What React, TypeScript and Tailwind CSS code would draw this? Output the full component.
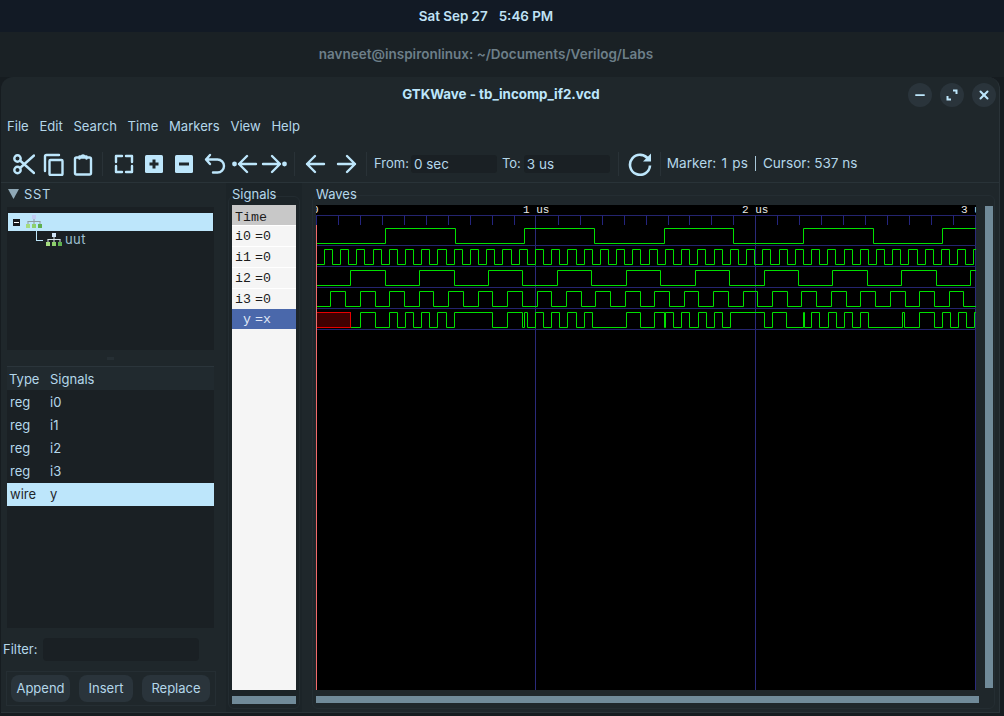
import { Minus, X } from "lucide-react";

const ACCENT = "#bde6fb";

// builds a square wave path from toggle positions, starting low
function wavePath(edges: number[], hi: number, lo: number, startX = 0, end = 660) {
  let d = `M${startX} ${lo}`;
  let high = false;
  for (const x of edges) {
    d += `H${x}V${high ? lo : hi}`;
    high = !high;
  }
  return d + `H${end}`;
}

function periodic(half: number, end = 660) {
  const out: number[] = [];
  for (let k = 1; half * k < end; k++) out.push(Math.floor(half * k + 0.2) + 0.5);
  return out;
}

const yEdges = [
  360, 375, 389, 397, 405, 413, 421, 429, 437, 446, 454, 492, 507, 522, 524, 527, 535, 543, 551, 559, 567, 576, 584,
  592, 626, 640, 654, 664, 665, 673, 681, 689, 698, 706, 714, 722, 730, 764, 772, 786, 803, 804, 811, 819, 828, 836,
  844, 852, 860, 868, 902, 904, 919, 934, 942, 950, 958, 966, 974,
].map((x) => x - 316 + 0.5);

const ticks: number[] = [];
for (let i = 1; i < 30; i++) if (i % 10 !== 0) ticks.push(Math.round(i * 21.97) + 0.5);

function WaveCanvas() {
  return (
    <svg width="660" height="485" viewBox="0 0 660 485" className="block bg-black">
      <g fontFamily="'Liberation Mono', monospace" fontSize="11" fill="#e8e8e8">
        <text x="-4" y="8">0</text>
        <text x="207" y="8">1 us</text>
        <text x="426" y="8">2 us</text>
        <text x="645" y="8">3 us</text>
      </g>
      <path d="M0 10.5H660" stroke="#24246e" />
      {ticks.map((x) => (
        <path key={x} d={`M${x} 10V20`} stroke="#24247e" />
      ))}
      <path d="M219.5 10V485M439.5 10V485M659.5 10V485" stroke="#2a2a7a" />
      <path d="M0 40.5H660M0 61.5H660M0 82.5H660M0 103.5H660M0 124.5H660" stroke="#24246e" />
      <g fill="none" stroke="#00e000">
        <path d={wavePath(periodic(69.6), 23.5, 38.5)} />
        <path d={wavePath(periodic(8.12), 44.5, 59.5)} />
        <path d={wavePath(periodic(34.45), 65.5, 80.5)} />
        <path d={wavePath(periodic(14.72), 86.5, 101.5)} />
        <path d={wavePath(yEdges, 107.5, 122.5, 34.5)} />
      </g>
      <rect x="0.5" y="107.5" width="34" height="15" fill="#400000" stroke="#e80000" />
      <path d="M0.5 10V20" stroke="#24247e" />
      <path d="M0.5 20V485" stroke="#f26a6a" />
    </svg>
  );
}

function Sep() {
  return <div className="w-px h-[24px] bg-[#293237]" />;
}

const iconProps = {
  fill: "none",
  stroke: ACCENT,
  strokeWidth: 2.4,
  strokeLinecap: "round" as const,
  strokeLinejoin: "round" as const,
};

function ToolIcon({ w = 24, children }: { w?: number; children: React.ReactNode }) {
  return (
    <svg width={w} height="24" viewBox={`0 0 ${w} 24`} className="shrink-0" {...iconProps}>
      {children}
    </svg>
  );
}

function Toolbar() {
  return (
    <div className="h-[38px] flex items-center pl-[10px] border-b border-[#293338]">
      <div className="flex items-center gap-[6px]">
        <ToolIcon>
          <circle cx="6.5" cy="6.5" r="3.2" />
          <circle cx="6.5" cy="18" r="3.2" />
          <path d="M9 8.5L23 21M9 16L23 3.5" />
        </ToolIcon>
        <ToolIcon>
          <path d="M4 19V4.5Q4 3 5.5 3H18" />
          <rect x="8.5" y="8" width="13" height="15" rx="1" />
        </ToolIcon>
        <ToolIcon>
          <rect x="4" y="5.5" width="16" height="17" rx="1.5" />
          <path d="M8.5 6.5V4.5H10.5A1.6 1.6 0 0 1 13.5 4.5H15.5V6.5" />
        </ToolIcon>
      </div>
      <div className="ml-[7px] mr-[9px]">
        <Sep />
      </div>
      <div className="flex items-center gap-[6px]">
        <ToolIcon>
          <path d="M10 4H4V10M14 4H20V10M10 20H4V14M14 20H20V14" />
        </ToolIcon>
        <svg width="24" height="24" viewBox="0 0 24 24" className="shrink-0">
          <rect x="3" y="3" width="18" height="18" rx="1.5" fill={ACCENT} />
          <path d="M12 7.5V16.5M7.5 12H16.5" stroke="#1f272b" strokeWidth="3" />
        </svg>
        <svg width="24" height="24" viewBox="0 0 24 24" className="shrink-0">
          <rect x="3" y="3" width="18" height="18" rx="1.5" fill={ACCENT} />
          <path d="M7 12H17" stroke="#1f272b" strokeWidth="3" />
        </svg>
        <ToolIcon>
          <path d="M8 3L4 7.5L8 12M4 7.5H15.5A6.5 6.5 0 0 1 15.5 20.5H11" />
        </ToolIcon>
      </div>
      <div className="flex items-center ml-[5px] gap-[3px]">
        <ToolIcon w={27}>
          <circle cx="3.5" cy="12" r="2.4" fill={ACCENT} stroke="none" />
          <path d="M16 4L8 12L16 20M8 12H25" />
        </ToolIcon>
        <ToolIcon w={27}>
          <circle cx="23.5" cy="12" r="2.4" fill={ACCENT} stroke="none" />
          <path d="M11 4L19 12L11 20M2 12H19" />
        </ToolIcon>
      </div>
      <div className="ml-[6px] mr-[9px]">
        <Sep />
      </div>
      <div className="flex items-center gap-[7px]">
        <ToolIcon>
          <path d="M11 4L3 12L11 20M3 12H20" />
        </ToolIcon>
        <ToolIcon>
          <path d="M12 4L20 12L12 20M3 12H20" />
        </ToolIcon>
      </div>
      <div className="ml-[7px] mr-[7px]">
        <Sep />
      </div>
      <span>From:</span>
      <div className="ml-[2px] w-[86px] h-[18px] rounded-[3px] bg-[#1a2024] pl-[3px] leading-[19px] text-[13.5px]">0 sec</div>
      <span className="ml-[5px]">To:</span>
      <div className="ml-[3px] w-[86px] h-[18px] rounded-[3px] bg-[#1a2024] pl-[3px] leading-[19px] text-[13.5px]">3 us</div>
      <div className="ml-[8px] mr-[9px]">
        <Sep />
      </div>
      <svg width="24" height="24" viewBox="0 0 24 24" className="shrink-0" fill="none">
        <path d="M20.5 7.5A10 10 0 1 0 22 13.5" stroke={ACCENT} strokeWidth="2.6" />
        <path d="M23 1.5V9.5H15Z" fill={ACCENT} />
      </svg>
      <div className="ml-[8px] mr-[6px]">
        <Sep />
      </div>
      <span className="text-[13.6px] [word-spacing:1.5px]">Marker: 1 ps</span>
      <span className="mx-[7px] w-px h-[15px] bg-[#a8c8da]" />
      <span className="text-[13.6px]">Cursor: 537 ns</span>
    </div>
  );
}

function Hierarchy({ size = "top" }: { size?: "top" | "sub" }) {
  const top = size === "top" ? "#c3cdf5" : "#cfe3f5";
  return (
    <svg width="17" height="14" viewBox="0 0 17 14" className="shrink-0">
      <rect x="6" y="0" width="4" height="4" fill={top} />
      <path d="M8 4V6.5M1.5 6.5H14.5M2 6.5V9M8 6.5V9M14 6.5V9" stroke={size === "top" ? "#8e9ba0" : "#d8e4ea"} fill="none" />
      <rect x="0" y="9" width="4" height="4" fill="#a5dc80" />
      <rect x="6" y="9" width="4" height="4" fill="#8ed06d" />
      <rect x="12" y="9" width="4" height="4" fill="#5fb04f" />
    </svg>
  );
}

const sigs = [
  ["reg", "i0"],
  ["reg", "i1"],
  ["reg", "i2"],
  ["reg", "i3"],
];

function LeftPanel() {
  return (
    <div className="w-[225px] shrink-0 flex flex-col pl-[6px] pr-[12px] relative">
      <div className="h-[24px] flex items-center pl-px gap-[5px]">
        <svg width="11" height="10" viewBox="0 0 11 10" className="-mt-[3px]">
          <path d="M0 0H11L5.5 10Z" fill="#8fa8b6" />
        </svg>
        <span className="tracking-[0.6px]">SST</span>
      </div>
      <div className="h-[143px] bg-[#1a2024] pt-[6px] px-px">
        <div className="h-[18px] bg-[#bde6fb] flex items-center pl-[5px] gap-[6px]">
          <span className="w-[7px] h-[7px] bg-[#16191c] flex items-center justify-center">
            <span className="w-[5px] h-px bg-white" />
          </span>
          <Hierarchy />
        </div>
        <div className="relative h-[20px] flex items-center pl-[38px] pb-[2px] gap-[2px]">
          <span className="absolute left-[28px] top-0 w-[7px] h-[10px] border-l border-b border-[#bde6fb]" />
          <Hierarchy size="sub" />
          <span className="text-[#9fc0d2] tracking-[0.4px]">uut</span>
        </div>
      </div>
      <div className="h-[16px] flex items-center justify-center">
        <span className="w-[7px] h-[3px] bg-[#262f34]" />
      </div>
      <div className="h-[24px] flex items-center pl-[2px] pt-[2px] bg-[#212a2f] border-t border-[#2b353b]">
        <span className="w-[41px]">Type</span>
        <span>Signals</span>
      </div>
      <div className="h-[238px] pt-px bg-[#1a2024]">
        {sigs.map(([t, n]) => (
          <div key={n} className="h-[23px] flex items-center pl-[3px]">
            <span className="w-[40px]">{t}</span>
            <span>{n}</span>
          </div>
        ))}
        <div className="h-[23px] flex items-center pl-[3px] bg-[#bde6fb] text-[#1f272b]">
          <span className="w-[40px]">wire</span>
          <span>y</span>
        </div>
      </div>
      <div className="h-[43px] -ml-[4px] flex items-center gap-[5px]">
        <span>Filter:</span>
        <div className="w-[156px] h-[23px] rounded-[4px] bg-[#1a2024]" />
      </div>
      <div className="-ml-px w-[210px] h-[35px] flex items-center gap-[9px] pl-[4px] border border-[#252e33]">
        <button className="w-[59px] h-[27px] rounded-[8px] bg-[#2a343b]">Append</button>
        <button className="w-[54px] h-[27px] rounded-[8px] bg-[#2a343b]">Insert</button>
        <button className="w-[68px] h-[27px] rounded-[8px] bg-[#2a343b]">Replace</button>
      </div>
    </div>
  );
}

const names = [
  ["i0", "=0"],
  ["i1", "=0"],
  ["i2", "=0"],
  ["i3", "=0"],
];

function SignalsPanel() {
  return (
    <div className="relative w-[76px] shrink-0 flex flex-col pl-[6px] bg-[#1c2428]">
      <div className="absolute left-[2px] right-[2px] top-[13px] bottom-[3px] rounded-[6px] border border-[#232c31]" />
      <div className="relative h-[22px] leading-[22px]">Signals</div>
      <div className="relative w-[64px] h-[485px] bg-[#f5f5f5] font-['Liberation_Mono',monospace] text-[13.3px] text-[#1c1c1c]">
        <div className="h-[20px] leading-[25px] bg-[#c8c8c8] pl-[3px] overflow-hidden">Time</div>
        {names.map(([a, b]) => (
          <div key={a} className="h-[21px] leading-[21px] pl-[3px] border-t border-white flex gap-[4px]">
            <span>{a}</span>
            <span>{b}</span>
          </div>
        ))}
        <div className="h-[20px] leading-[22px] pl-[11px] bg-[#4a68ab] text-[#dfe6f5] flex gap-[4px]">
          <span>y</span>
          <span>=x</span>
        </div>
      </div>
      <div className="relative w-[64px] h-[8px] mt-[6px] bg-[#708a99]" />
    </div>
  );
}

function WavesPanel() {
  return (
    <div className="relative flex-1 flex flex-col pl-[14px]">
      <div className="absolute left-[10px] right-[4px] top-[12px] bottom-[3px] rounded-[6px] border border-[#242d32]" />
      <div className="relative h-[22px] leading-[22px]">Waves</div>
      <div className="relative flex gap-[9px]">
        <WaveCanvas />
        <div className="w-[8px] h-[482px] mt-px bg-[#708a99]" />
      </div>
      <div className="relative w-[663px] h-[7px] mt-[6px] bg-[#708a99]" />
    </div>
  );
}

export default function App() {
  return (
    <div className="w-[1004px] h-[716px] overflow-hidden flex flex-col bg-[#161c20] font-['Inter',sans-serif] text-[13px] text-[#b4d7ea]">
      <div className="h-[32px] shrink-0 bg-[#121a25] flex items-center justify-center pr-[32px] font-semibold text-[13.4px] text-[#c0e2f5]">
        <span>Sat Sep 27</span>
        <span className="ml-[11px]">5:46 PM</span>
      </div>
      <div className="h-[45px] shrink-0 bg-[#1a2125] flex items-center justify-center pr-[32px] font-semibold text-[13.5px] text-[#6d7f89]">
        navneet@inspironlinux: ~/Documents/Verilog/Labs
      </div>
      <div className="w-[999px] h-[636px] ml-px flex flex-col rounded-t-[12px] bg-[#1f272b] border-b border-r border-[#2a3338]">
        <div className="h-[34px] shrink-0 relative flex items-center justify-center pt-[2px] pl-[2px] font-bold text-[13.33px] text-[#bde6fb]">
          GTKWave - tb_incomp_if2.vcd
          <div className="absolute right-[3px] top-[6px] flex gap-[8px]">
            <span className="w-[24px] h-[24px] rounded-full bg-[#2a343b] flex items-center justify-center">
              <Minus size={14} strokeWidth={3} color={ACCENT} />
            </span>
            <span className="w-[24px] h-[24px] rounded-full bg-[#2a343b] flex items-center justify-center">
              <svg width="12" height="12" viewBox="0 0 12 12" fill="none" stroke={ACCENT} strokeWidth="2">
                <path d="M7 1.5H10.5V5M1.5 7V10.5H5" />
              </svg>
            </span>
            <span className="w-[24px] h-[24px] rounded-full bg-[#2a343b] flex items-center justify-center">
              <X size={14} strokeWidth={3.5} color={ACCENT} />
            </span>
          </div>
        </div>
        <div className="h-[34px] shrink-0 flex items-center pl-[6px] pb-[2px] gap-[10.7px] text-[13.1px]">
          {["File", "Edit", "Search", "Time", "Markers", "View", "Help"].map((m) => (
            <span key={m}>{m}</span>
          ))}
        </div>
        <Toolbar />
        <div className="flex-1 flex">
          <LeftPanel />
          <SignalsPanel />
          <WavesPanel />
        </div>
      </div>
    </div>
  );
}
